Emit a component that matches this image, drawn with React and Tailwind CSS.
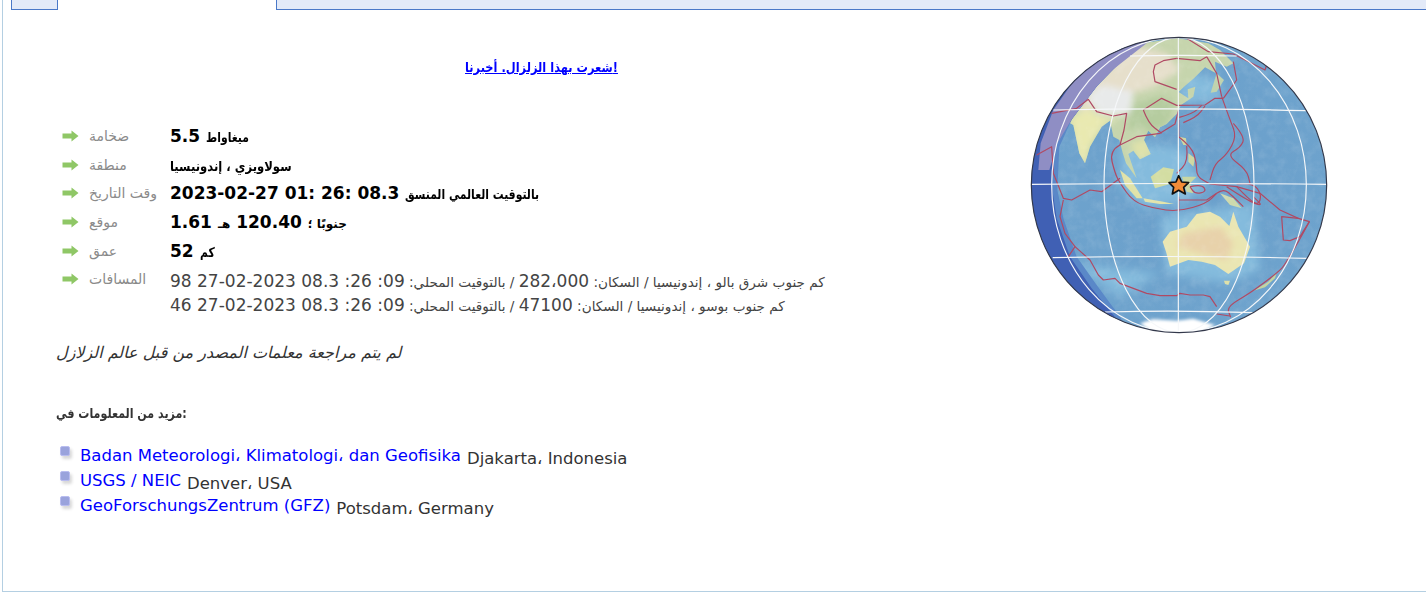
import React from 'react';

const sans = "font-['DejaVu_Sans',sans-serif]";

// rounds a list of points into a curve, the subduction arcs in the map are smooth
function curve(pts) {
  const p = pts.trim().split(/\s+/).map((s) => s.split(',').map(Number));
  let d = `M${p[0][0]} ${p[0][1]}`;
  for (let i = 1; i < p.length - 1; i++) {
    const mx = (p[i][0] + p[i + 1][0]) / 2;
    const my = (p[i][1] + p[i + 1][1]) / 2;
    d += ` Q${p[i][0]} ${p[i][1]} ${mx} ${my}`;
  }
  const last = p[p.length - 1];
  return `${d} L${last[0]} ${last[1]}`;
}

const arcs = [
  '300,345 268,362 285,430 300,460 340,515 400,535 475,545 560,520 590,490',
  '370,240 385,280 425,310',
  '490,278 530,262 555,228',
  '478,262 520,250 545,226',
  '605,200 630,270 650,320 620,375 585,400 570,450',
  '640,280 675,320 662,352 620,375 680,420 690,460',
  '476,320 515,350 530,400 530,440 570,462',
  '500,348 505,395 470,430',
  '650,462 700,458 725,495 715,525 690,510 650,470',
  '620,470 680,510 730,530 700,500',
  '590,490 610,475 640,500 670,530',
  '510,470 545,462 560,485 525,492 510,470',
  '868,575 800,700 770,730 690,790 620,830 632,862',
];

// ridges and transforms keep their corners
const ridges = [
  'M95 250 L170 235 L205 208 L230 245 L280 258 L320 250 L312 300 L300 345',
  'M300 345 L350 320 L420 310 L465 282 L476 240',
  'M370 240 L425 205 L470 226 L555 225 L585 205 L610 205',
  'M470 85 L430 92 L405 105 L400 125 L405 155 L470 178',
  'M470 85 L540 92 L560 80 L590 130 L605 200',
  'M476 270 L476 320',
  'M570 462 L650 470 L720 490 L780 540 L835 565',
  'M476 500 L476 545 M475 510 L560 510 L590 490',
  'M50 375 L95 350 L100 430 L130 505 L155 510 L210 480 L245 485 L300 445',
  'M130 510 L120 560 L135 610 L165 650 L145 680',
  'M165 650 L210 690 L235 735 L250 750 L285 745 L300 760 L340 775 L380 790 L420 797 L470 797 L480 790 L510 795 L550 795 L570 800 L590 830',
  'M785 560 L835 565 L868 575 L840 620 L810 632 L790 630 Z',
  'M590 852 L630 858',
  'M500 25 L565 65 L640 72 L735 120 L740 105',
  'M640 95 L650 150 L610 205',
];

function Arrow() {
  return (
    <svg width="17" height="12" viewBox="0 0 17 12" className="ml-[6px] mt-[3px] blur-[0.6px]">
      <path d="M0.5 3.5 H9.5 V0.5 L16.5 6 L9.5 11.5 V8.5 H0.5 Z" fill="#8fc766" />
    </svg>
  );
}

function Bullet() {
  return (
    <span className="relative block h-[11px] w-[11px] shrink-0">
      <span className="absolute left-[2px] top-[3px] h-[10px] w-[10px] rounded-[2px] bg-[#d8d8d8] blur-[1.5px]" />
      <span className="absolute left-0 top-0 h-[10px] w-[10px] rounded-[2px] border border-[#b9bdf0] bg-[#9aa3dc]" />
    </span>
  );
}

function Row({ label, children, className = 'h-[28.7px]' }) {
  return (
    <div className={`grid grid-cols-[33px_81px_1fr] ${className}`}>
      <Arrow />
      <span className="text-[14px] leading-[18px] text-[#8a8a8a]">{label}</span>
      <div className="text-[17px] font-bold leading-[18px] text-black">{children}</div>
    </div>
  );
}

// bold arabic runs, DejaVu is much wider than the font in the picture
function Ar({ children, className = 'scale-x-[0.8]' }) {
  return <span className={`inline-block origin-left text-[13.5px] ${className}`}>{children}</span>;
}

function Num({ children }) {
  return <span className="text-[17px] leading-[20px]">{children}</span>;
}

function Globe() {
  return (
    <svg width="314" height="310" viewBox="18 0 942 930" className="shrink-0">
      <defs>
        <radialGradient id="sea" cx="0.55" cy="0.48" r="0.6">
          <stop offset="0" stopColor="#6a9fcb" />
          <stop offset="0.8" stopColor="#6ea3cd" />
          <stop offset="1" stopColor="#6496c6" />
        </radialGradient>
        <clipPath id="disc"><circle cx="477" cy="465" r="443" /></clipPath>
        <filter id="soft"><feGaussianBlur stdDeviation="2.2" /></filter>
        <filter id="soft2"><feGaussianBlur stdDeviation="0.9" /></filter>
        <filter id="ice"><feGaussianBlur stdDeviation="5" /></filter>
        <filter id="patch"><feGaussianBlur stdDeviation="9" /></filter>
        <filter id="softer"><feGaussianBlur stdDeviation="14" /></filter>
        <filter id="grain" x="0" y="0" width="1" height="1">
          <feTurbulence type="fractalNoise" baseFrequency="0.035" numOctaves="4" seed="4" />
          <feColorMatrix values="0 0 0 0 1  0 0 0 0 1  0 0 0 0 1  1.6 0 0 0 -0.62" />
        </filter>
        <clipPath id="asia">
          <path d="M335 45 L470 24 L565 40 L600 60 L640 100 L620 110 L585 95 L588 130 L555 112 L522 145 L492 170 L476 186 L505 205 L503 178 L526 170 L520 200 L482 226 L470 252 L440 282 L420 292 L405 322 L385 302 L372 330 L392 372 L360 388 L340 362 L325 372 L350 445 L318 400 L308 368 L298 330 L280 320 L270 272 L245 290 L210 350 L195 400 L178 370 L160 285 L120 262 L215 140 Z" />
        </clipPath>
      </defs>
      <g clipPath="url(#disc)">
        <rect x="0" y="0" width="960" height="930" fill="url(#sea)" />
        {/* shallow seas */}
        <g filter="url(#softer)" fill="#84bbdd">
          <path d="M300 340 L480 350 L560 480 L470 520 L370 535 L300 470 Z" />
          <path d="M480 120 L600 150 L600 210 L480 220 Z" />
          <path d="M420 560 L700 520 L720 720 L620 760 L440 730 Z" />
          <path d="M150 700 L420 730 L300 800 Z" />
        </g>
        {/* asia, colour zones fade into each other inside the coast */}
        <g filter="url(#soft)">
          <g clipPath="url(#asia)">
            <rect x="100" y="0" width="560" height="460" fill="#c6d5ad" />
            <g filter="url(#patch)">
              <path d="M215 170 L335 45 L440 70 L480 120 L405 170 L340 190 L320 235 L225 235 L170 245 Z" fill="#e6dfcb" />
              <path d="M200 195 L250 165 L340 185 L330 250 L280 256 L230 245 Z" fill="#e8eaea" />
              <path d="M350 215 L440 195 L470 225 L440 280 L405 318 L370 290 L320 300 L325 255 Z" fill="#b5cc9f" />
              <path d="M150 262 L205 235 L235 255 L300 270 L268 275 L245 292 L210 350 L195 410 L170 370 Z" fill="#e9e9b0" />
              <path d="M330 340 L385 325 L395 375 L355 392 Z" fill="#dfe2aa" />
            </g>
          </g>
          <path d="M590 130 L612 150 L590 185 L572 188 Z" fill="#c0d3ae" />
          <path d="M392 440 L430 412 L462 418 L450 462 L405 475 Z" fill="#d3dda2" />
          <path d="M300 420 L330 445 L368 505 L350 505 L315 465 Z" fill="#e0e2a6" />
          <path d="M370 505 L430 515 L462 522 L420 522 L375 515 Z" fill="#e3e4ab" />
          <path d="M478 320 L498 325 L500 345 L490 345 Z M505 370 L525 385 L520 410 L505 395 Z" fill="#cfd8a2" />
          <path d="M486 440 L530 440 L510 460 L520 490 L500 485 Z" fill="#c7d6a0" />
          <path d="M600 490 L640 505 L665 535 L630 525 Z" fill="#cdd9ac" />
          <path d="M428 635 L450 605 L500 590 L530 552 L570 545 L600 560 L628 588 L640 545 L655 590 L690 650 L672 700 L625 732 L585 705 L545 695 L505 690 L450 710 L438 665 Z" fill="#eae6b2" />
          <path d="M612 752 L630 752 L625 765 L615 762 Z" fill="#dde0a8" />
          <path d="M700 782 L745 755 L770 728 L765 745 L735 772 Z" fill="#c4d39e" />
        </g>
        <path d="M360 880 L400 868 L470 872 L520 866 L585 885 L520 925 L420 925 Z" fill="#ffffff" filter="url(#ice)" />
        <path d="M490 610 L600 590 L640 640 L620 690 L540 670 L470 650 Z" fill="#e8d2aa" filter="url(#patch)" />
        <rect x="30" y="20" width="900" height="890" filter="url(#grain)" opacity="0.13" />
        {/* night side */}
        <path d="M400 0 L280 118 L231 168 L156 267 L118 350 L112 480 L130 565 L170 680 L230 765 L300 860 L340 930 L0 930 L0 0 Z" fill="#5a88c8" filter="url(#soft)" />
        <path d="M400 0 L280 118 L231 168 L156 267 L100 350 L95 465 L110 565 L150 680 L215 775 L300 880 L320 930 L0 930 L0 0 Z" fill="#3f60b4" filter="url(#soft)" />
        <path d="M395 28 L280 118 L231 168 L156 267 L112 340 L88 420 L55 420 L62 340 L100 240 L170 140 L280 58 Z" fill="#8f8ec4" filter="url(#soft)" />
        {/* plate boundaries */}
        <g fill="none" stroke="#b04a64" strokeWidth="3.6" strokeLinejoin="round" filter="url(#soft2)">
          {arcs.map((p) => <path key={p} d={curve(p)} />)}
          {ridges.map((d) => <path key={d} d={d} />)}
        </g>
        {/* graticule */}
        <g fill="none" stroke="#f6f8fa" strokeWidth="3.4" filter="url(#soft2)">
          <path d="M30 463 Q477 458 925 463" />
          <path d="M100 240 Q477 232 858 242" />
          <path d="M330 78 Q477 74 650 78" />
          <path d="M98 683 Q477 675 862 685" />
          <path d="M255 846 Q477 840 700 848" />
          <path d="M475 22 V908" />
          <ellipse cx="477" cy="465" rx="225" ry="443" />
          <ellipse cx="477" cy="465" rx="382" ry="443" />
        </g>
      </g>
      <circle cx="477" cy="465" r="443" fill="none" stroke="#33384a" strokeWidth="3.5" />
      <path d="M476 437 L485 456 L506 458 L491 472 L496 492 L476 481 L457 492 L461 472 L447 458 L468 456 Z" fill="#f28c38" stroke="#111" strokeWidth="5" strokeLinejoin="round" />
    </svg>
  );
}

const sources = [
  ['Badan Meteorologi، Klimatologi، dan Geofisika', 'Djakarta، Indonesia'],
  ['USGS / NEIC', 'Denver، USA'],
  ['GeoForschungsZentrum (GFZ)', 'Potsdam، Germany'],
];

export default function App() {
  return (
    <div className={`flex h-[592px] w-full flex-col overflow-hidden bg-white ${sans}`}>
      {/* tab strip */}
      <div className="flex h-[10px] pl-[11px]">
        <div className="h-full w-[47px] border-x border-b border-[#4a78c8] bg-[#e3eaf8]" />
        <div className="h-full w-[218px]" />
        <div className="h-full flex-1 border-l border-b border-[#4a78c8] bg-[#e3eaf8]" />
      </div>
      {/* content frame */}
      <div className="ml-[2px] mt-[-10px] flex flex-1 border-b border-l border-[#b4cfe2] pl-[53px] pt-[30px]">
        <div className="w-[970px] shrink-0 pt-[27px]">
          <p className="text-center text-[13.5px] font-bold leading-[20px]">
            <a href="#" className="inline-block scale-x-[0.845] text-[#0000ff] underline">شعرت بهذا الزلزال. أخبرنا!</a>
          </p>

          <div className="mt-[50px]">
            <Row label="ضخامة">5.5 <Ar>ميغاواط</Ar></Row>
            <Row label="منطقة"><Ar className="scale-x-[0.86]">سولاويزي ، إندونيسيا</Ar></Row>
            <Row label="وقت التاريخ">2023-02-27 01: 26: 08.3 <Ar>بالتوقيت العالمي المنسق</Ar></Row>
            <Row label="موقع">1.61 <bdi className="text-[12px]">هـ</bdi> 120.40 <bdi className="text-[12px]">جنوبًا ؛</bdi></Row>
            <Row label="عمق">52 <Ar>كم</Ar></Row>
            <Row label="المسافات" className="h-[48px]">
              <div className="text-[13.6px] font-normal leading-[24px] whitespace-nowrap text-[#444]">
                <p><Num>98 </Num>كم جنوب شرق بالو ، إندونيسيا / السكان: <Num>282،000</Num> / بالتوقيت المحلي: <Num>09: 26: 08.3 2023-02-27</Num></p>
                <p><Num>46 </Num>كم جنوب بوسو ، إندونيسيا / السكان: <Num>47100</Num> / بالتوقيت المحلي: <Num>09: 26: 08.3 2023-02-27</Num></p>
              </div>
            </Row>
          </div>

          <p className="mt-[25px] text-[16px] italic leading-[20px] text-[#333]">لم يتم مراجعة معلمات المصدر من قبل عالم الزلازل</p>
          <p className="mt-[40px] text-[13.5px] font-bold leading-[20px] text-[#333]">
            <span className="inline-block origin-left scale-x-[0.82]">مزيد من المعلومات في:</span>
          </p>

          <ul className="mt-[23px] flex flex-col">
            {sources.map(([name, place]) => (
              <li key={name} className="flex h-[25px] pl-[4px]">
                <Bullet />
                <span className="ml-[9px] text-[16.5px] leading-[20px] whitespace-nowrap">
                  <a href="#" className="text-[#0000ff]">{name}</a>
                  <span className="relative top-[3px] ml-[6px] text-[#333]">{place}</span>
                </span>
              </li>
            ))}
          </ul>
        </div>
        <Globe />
      </div>
    </div>
  );
}
